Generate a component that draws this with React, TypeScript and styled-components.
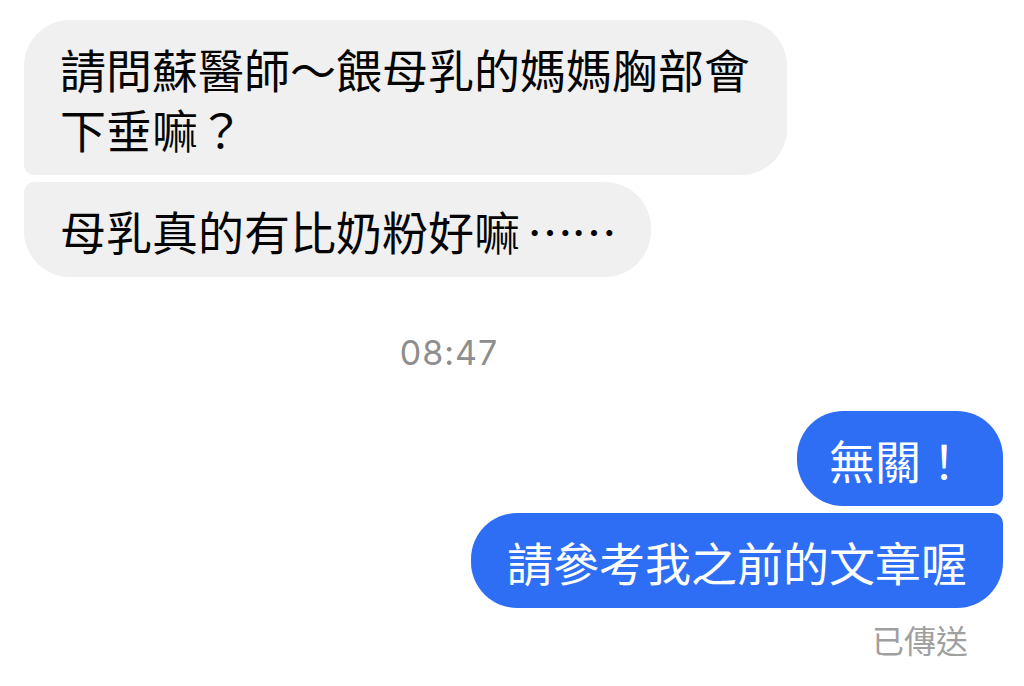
import React from "react";
import styled, { createGlobalStyle } from "styled-components";

const GlobalStyle = createGlobalStyle`
  html, body {
    margin: 0;
    padding: 0;
    background: #ffffff;
  }
  body {
    font-family: "Noto Sans CJK TC", "Noto Sans", sans-serif;
  }
`;

const Page = styled.div`
  width: 1024px;
  height: 686px;
  box-sizing: border-box;
  padding: 20px 21px 0 24px;
  display: flex;
  flex-direction: column;
  overflow: hidden;
  background: #ffffff;
`;

const Group = styled.div<{ $side: "in" | "out" }>`
  display: flex;
  flex-direction: column;
  align-items: ${(p) => (p.$side === "in" ? "flex-start" : "flex-end")};
  gap: 7px;
`;

type Pos = "first" | "last";

const radius = (side: "in" | "out", pos: Pos) => {
  const big = "46px";
  const small = "10px";
  if (side === "in") {
    return pos === "first"
      ? `${big} ${big} ${big} ${small}`
      : `${small} ${big} ${big} ${big}`;
  }
  return pos === "first"
    ? `${big} ${big} ${small} ${big}`
    : `${big} ${small} ${big} ${big}`;
};

const Bubble = styled.div<{ $side: "in" | "out"; $pos: Pos; $padLeft?: number }>`
  box-sizing: border-box;
  max-width: 763px;
  padding: 18px 36px 17px ${(p) => p.$padLeft ?? 36}px;
  font-family: "Noto Sans CJK TC", "Noto Sans CJK SC", sans-serif;
  font-size: 46px;
  line-height: 60px;
  background: ${(p) => (p.$side === "in" ? "#f0f0f0" : "#2d6ef5")};
  color: ${(p) => (p.$side === "in" ? "#050505" : "#ffffff")};
  border-radius: ${(p) => radius(p.$side, p.$pos)};
`;

const Ellipsis = styled.span`
  margin-left: 7px;
  letter-spacing: -2px;
`;

const Timestamp = styled.div`
  align-self: center;
  margin: 56px 129px 38px 0;
  font-family: Inter, "Noto Sans", sans-serif;
  font-size: 34px;
  line-height: 40px;
  letter-spacing: 1px;
  color: #8e8e8e;
`;

const Status = styled.div`
  align-self: flex-end;
  margin: 11px 35px 0 0;
  font-family: "Noto Sans CJK TC", sans-serif;
  font-size: 32px;
  line-height: 40px;
  color: #a0a0a0;
`;

export default function App() {
  return (
    <>
      <GlobalStyle />
      <Page>
        <Group $side="in">
          <Bubble $side="in" $pos="first">
            請問蘇醫師～餵母乳的媽媽胸部會下垂嘛？
          </Bubble>
          <Bubble $side="in" $pos="last">
            母乳真的有比奶粉好嘛<Ellipsis>……</Ellipsis>
          </Bubble>
        </Group>
        <Timestamp>08:47</Timestamp>
        <Group $side="out">
          <Bubble $side="out" $pos="first" $padLeft={32}>
            無關！
          </Bubble>
          <Bubble $side="out" $pos="last">
            請參考我之前的文章喔
          </Bubble>
        </Group>
        <Status>已傳送</Status>
      </Page>
    </>
  );
}
